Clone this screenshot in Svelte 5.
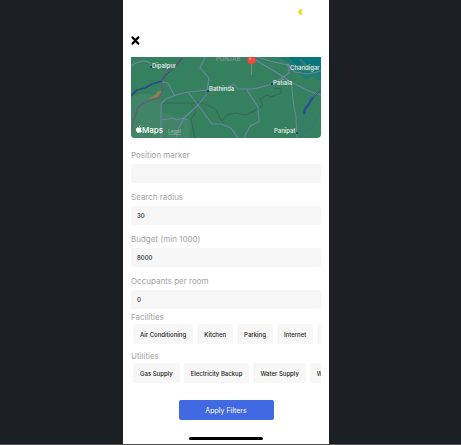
<script>
  let marker = $state('');
  let radius = $state('30');
  let budget = $state('8000');
  let occupants = $state('0');
  const facilities = ['Air Conditioning', 'Kitchen', 'Parking', 'Internet'];
  const utilities = ['Gas Supply', 'Electricity Backup', 'Water Supply', 'W'];
</script>

<div class="stage">
  <main class="phone">
    <div class="status">
      <svg width="6" height="6" viewBox="0 0 6 6" aria-hidden="true">
        <path d="M5 .4 3.6 2.4V3.6L5 5.6Q3.8 6 2.4 5.8C-.4 5 -.4 1 2 .2Q3.6 0 5 .4Z" fill="#fbd91c" />
      </svg>
    </div>
    <header>
      <button class="close" type="button" aria-label="Close">
        <svg width="9" height="9" viewBox="0 0 9 9"><path d="M1.6 1.4 7.2 7.6M7.2 1.4 1.6 7.6" stroke="#000" stroke-width="2.3" stroke-linecap="round" /></svg>
      </button>
    </header>

    <div class="map">
      <svg viewBox="0 0 190 81" preserveAspectRatio="xMidYMid slice" role="img" aria-label="Map">
        <rect width="190" height="81" fill="#35815f" />
        <path d="M0 39Q17 34 29 40L30 55 60 64 58 81H0Z" fill="#418466" />
        <path d="M148 0H190V24L181 19 175 23 166 14 160 16 154 5Z" fill="#1f7c70" />
        <path d="M158 0 165 9 174 5 182 16 190 12V0Z" fill="#087681" />
        <path d="M150 3 158 8 160 16M169 2 177 11 184 9" fill="none" stroke="#397d65" stroke-width="2" />
        <path d="M16 43 24 38 27 34 31 34 30 39 24 41Z" fill="#8a8253" />
        <g fill="none" stroke-linejoin="round">
          <path d="M31 46 44 46 59 46 72 46 82 51 86 54 88 60 91 64 96 58 104 56 115 58 123 54 132 48 129 42 136 38 140 40 150 36 150 31 143 32M60 47 65 55 60 62 62 72 64 81" stroke="#38604f" stroke-width=".8" />
          <path d="M0 72 7 50 17 44 28 41 32 32 30 24 37 13 48 5 52 0" stroke="#615e73" stroke-width="1.4" />
          <path d="M31 23 38 15 46 8 51 1" stroke="#43477c" stroke-width="1" />
          <path d="M0 39 6 33 14 31 21 27 31 24" stroke="#284b8b" stroke-width="1.8" />
          <g stroke="#6c84a4" stroke-width="1.1">
            <path d="M0 9Q9 2 18 5L20 9M31 25 37 26 43 38M30 81V47L35 42 45 38 57 35 77 33 95 31 103 27 107 32 122 32 138 28 150 22 158 16 158 9M74 0 69 11 78 21 76 33M57 35 67 48 81 67H90L100 71 107 81M76 37 67 48 54 60 48 70 45 81M30 63 38 62 41 61 46 63 53 61 57 63M116 33 127 50 128 65 119 69 113 81" />
            <path d="M121 0 131 7 143 14 160 25 163 50 165 60 166 81M126 0 139 4 157 8 164 15 177 17 190 14M160 25 178 34 190 38" />
          </g>
          <path d="M190 31 184 37 181 43 175 51 172 61 173 74 170 81M190 56 185 61 182 71 174 75" stroke="#34738a" stroke-width="1" />
          <path d="M182 40 178 47 174 52 173 57" stroke="#314b9b" stroke-width="2.4" />
          <path d="M190 33 183 40" stroke="#344b98" stroke-width="1" />
        </g>
        <g fill="#27293e"><circle cx="20" cy="10" r="1" /><circle cx="77" cy="34" r="1" /><circle cx="141" cy="27" r="1" /><circle cx="166" cy="76" r="1" /></g>
        <circle cx="157" cy="8" r="1.2" fill="none" stroke="#9186a5" stroke-width=".7" />
        <g class="places">
          <text x="21" y="11">Dipalpur</text>
          <text x="78" y="34">Bathinda</text>
          <text x="142" y="28">Patiala</text>
          <text x="159" y="13">Chandigar</text>
          <text x="143" y="76">Panipat</text>
          <text x="85" y="4" class="state">PUNJAB</text>
          <text x="37" y="76" class="legal">Legal</text>
        </g>
        <path d="M120.5 6V18" stroke="#8a8885" stroke-width="1" />
        <circle cx="120.5" cy="3" r="4.1" fill="#f8473d" />
        <circle cx="119.3" cy="1.8" r="1" fill="#ff8b83" />
        <path d="M8 70.8C7 70.2 5.2 70.4 5 72.5C5 74.4 6.2 76 7.2 75.8L8.2 75.5 9.3 75.8C10.1 75.8 10.8 74.8 11 74.1C9.6 73.4 9.7 71.8 10.8 71.2C10 70.2 8.8 70.4 8 70.8ZM8 70.2C7.9 69.2 8.7 68.4 9.5 68.3C9.6 69.3 8.9 70.1 8 70.2Z" fill="#fff" />
        <text x="11" y="76" class="brand">Maps</text>
      </svg>
    </div>

    <form onsubmit={(e) => e.preventDefault()}>
      <div class="field"><label for="marker">Position marker</label><input id="marker" bind:value={marker} /></div>
      <div class="field"><label for="radius">Search radius</label><input id="radius" bind:value={radius} /></div>
      <div class="field"><label for="budget">Budget (min 1000)</label><input id="budget" bind:value={budget} /></div>
      <div class="field"><label for="occupants">Occupants per room</label><input id="occupants" bind:value={occupants} /></div>

      <section>
        <h2>Facilities</h2>
        <div class="chips">
          {#each facilities as name}<button type="button">{name}</button>{/each}
          <button type="button" aria-label="More facilities"></button>
        </div>
      </section>
      <section>
        <h2>Utilities</h2>
        <div class="chips">
          {#each utilities as name}<button type="button">{name}</button>{/each}
        </div>
      </section>
      <button class="apply" type="submit">Apply Filters</button>
    </form>
    <div class="home"></div>
  </main>
</div>

<style>
  :global(body) { margin: 0; background: #1c1f24; }
  .stage {
    box-sizing: border-box;
    min-height: 100vh;
    display: grid;
    grid-template-columns: 123fr 206fr 132fr;
    border-bottom: 1px solid #514f50;
    background: #1c1f24;
    font-family: Inter, "Liberation Sans", sans-serif;
  }
  .phone {
    grid-column: 2;
    min-width: 0;
    box-sizing: border-box;
    padding: 0 8px 4px;
    display: flex;
    flex-direction: column;
    background: #fff;
  }
  button, input { font: inherit; border: 0; margin: 0; box-sizing: border-box; }
  svg { display: block; }
  .status { height: 26px; padding: 9px 17px 0 0; display: flex; justify-content: flex-end; box-sizing: border-box; }
  header { height: 31px; padding-top: 10px; box-sizing: border-box; }
  .close { padding: 0; background: none; display: block; }
  .map { border-radius: 0 0 4px 4px; overflow: hidden; }
  .map svg { width: 100%; height: auto; }
  .places { font-size: 6px; font-weight: 500; fill: #e5eee9; }
  .places .state { font-size: 6px; fill: #879b9c; }
  .places .legal { font-size: 5px; fill: #91b5a4; text-decoration: underline; }
  .brand { font-size: 8px; font-weight: 500; fill: #fff; }
  form { display: flex; flex-direction: column; padding-top: 9px; }
  .field { display: flex; flex-direction: column; margin-bottom: 6px; }
  label, h2 { margin: 0; font-size: 8px; font-weight: 400; color: #a3a3a3; }
  label { line-height: 17px; }
  input {
    width: 100%;
    height: 19px;
    padding: 0 6px;
    border-radius: 2px;
    background: #f6f6f6;
    color: #222;
    font-size: 6px;
    font-weight: 500;
  }
  section { margin-bottom: 7px; }
  .field + section { margin-top: -3px; }
  h2 { line-height: 10px; padding-bottom: 2px; }
  .chips { display: flex; gap: 4px; padding-left: 2px; overflow: hidden; }
  .chips button {
    flex: none;
    height: 20px;
    min-width: 19px;
    padding: 0 7px;
    border-radius: 2px;
    background: #f7f7f7;
    color: #222;
    font-size: 6px;
    font-weight: 500;
  }
  .apply {
    align-self: center;
    width: 50%;
    height: 20px;
    margin-top: 10px;
    padding: 0;
    border-radius: 2px;
    background: #4169e1;
    color: #fff;
    font-size: 7px;
  }
  .home { width: 74px; height: 3px; margin: auto auto 0; border-radius: 2px; background: #000; }
</style>
